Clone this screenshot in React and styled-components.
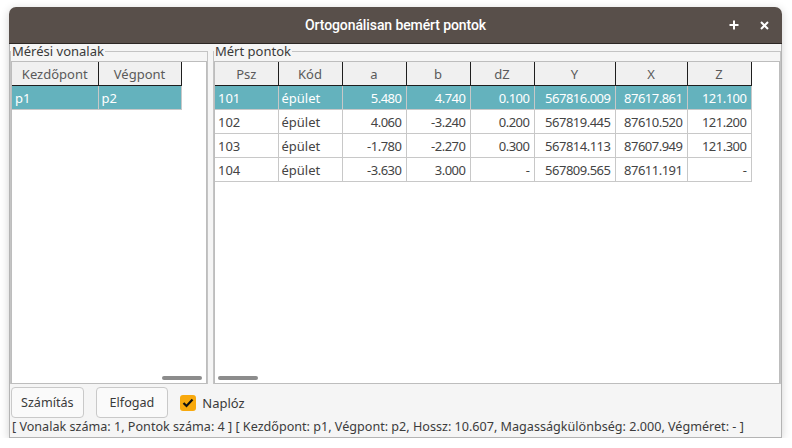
import styled, { createGlobalStyle } from "styled-components";

const GlobalStyle = createGlobalStyle`
  html, body {
    margin: 0;
    background: #ffffff;
  }
  body {
    font-family: "Noto Sans", "Open Sans", sans-serif;
    font-size: 13px;
    color: #3c3c3c;
  }
`;

const Window = styled.div`
  margin: 7px 0 0 9px;
  width: 773px;
  height: 431px;
  display: flex;
  flex-direction: column;
  border-radius: 7px 7px 0 0;
  box-shadow: 0 2px 10px rgba(0, 0, 0, 0.18);
  overflow: hidden;
`;

const TitleBar = styled.div`
  height: 36px;
  flex: none;
  background: #584f4a;
  border-bottom: 1px solid #2c2724;
  display: flex;
  align-items: center;
  justify-content: center;
  position: relative;
  color: #ffffff;
  font-family: "Roboto", sans-serif;
  font-weight: 500;
  font-size: 14px;
  letter-spacing: -0.1px;
`;

const TitleButtons = styled.div`
  position: absolute;
  right: 11px;
  top: 0;
  height: 100%;
  display: flex;
  align-items: center;
  gap: 16px;
`;

const TitleButton = styled.span`
  width: 14px;
  height: 14px;
  display: flex;
  align-items: center;
  justify-content: center;
`;

const Body = styled.div`
  flex: 1;
  min-height: 0;
  background: #f5f5f5;
  border: 1px solid #b4b4b4;
  border-top: none;
  display: flex;
  flex-direction: column;
`;

const Panels = styled.div`
  flex: 1;
  min-height: 0;
  display: grid;
  grid-template-columns: 198px 1fr;
  gap: 5px;
`;

const Group = styled.fieldset`
  margin: 0;
  padding: 0;
  border: 1px solid #c4c4c4;
  border-bottom: none;
  min-width: 0;
  display: flex;
  flex-direction: column;
`;

const Legend = styled.legend`
  padding: 0 1px;
  line-height: 14px;
  font-size: 13px;
  color: #3a3a3a;
`;

const ScrollArea = styled.div`
  flex: 1;
  margin-top: 3px;
  background: #ffffff;
  border: 1px solid #bdbdbd;
  position: relative;
  overflow: hidden;
`;

const Table = styled.table`
  border-collapse: collapse;
  table-layout: fixed;
  font-size: 13px;
`;

const Th = styled.th`
  height: 23px;
  padding: 0 4px;
  background: #f0f0f0;
  color: #5a5a5a;
  font-weight: 400;
  text-align: center;
  border-right: 1px solid #1e1e1e;
  border-bottom: 1px solid #1e1e1e;
`;

const Row = styled.tr`
  background: ${(p) => (p.$selected ? "#64b2bd" : "#ffffff")};
  color: ${(p) => (p.$selected ? "#ffffff" : "#444444")};
`;

const Td = styled.td`
  height: 23px;
  padding: 0 4px 0 3px;
  text-align: ${(p) => (p.$num ? "right" : "left")};
  letter-spacing: ${(p) => (p.$num ? "-0.5px" : "0")};
  border-right: 1px solid #c8c8c8;
  border-bottom: 1px solid #c8c8c8;
  white-space: nowrap;
`;

const ScrollThumb = styled.div`
  position: absolute;
  bottom: 3px;
  height: 4px;
  width: 40px;
  border-radius: 2px;
  background: #8c8c8c;
  left: ${(p) => p.$left}px;
`;

const ButtonRow = styled.div`
  flex: none;
  display: flex;
  align-items: center;
  gap: 12px;
  padding: 3px 0 0 1px;
`;

const Button = styled.button`
  height: 31px;
  padding: 0 ${(p) => p.$pad}px;
  background: #fafafa;
  border: 1px solid #c9c9c9;
  border-radius: 4px;
  font-family: inherit;
  font-size: 12.6px;
  color: #3a3a3a;
`;

const Check = styled.label`
  display: flex;
  align-items: center;
  gap: 6px;
  color: #3a3a3a;
  font-size: 13px;
`;

const CheckBox = styled.span`
  width: 16px;
  height: 16px;
  border-radius: 3px;
  background: #f8a90d;
  display: flex;
  align-items: center;
  justify-content: center;
`;

const Status = styled.div`
  flex: none;
  height: 19px;
  line-height: 17px;
  padding-left: 2px;
  font-size: 12.6px;
  color: #3c3c3c;
`;

const lines = [{ from: "p1", to: "p2" }];

const points = [
  ["101", "épület", "5.480", "4.740", "0.100", "567816.009", "87617.861", "121.100"],
  ["102", "épület", "4.060", "-3.240", "0.200", "567819.445", "87610.520", "121.200"],
  ["103", "épület", "-1.780", "-2.270", "0.300", "567814.113", "87607.949", "121.300"],
  ["104", "épület", "-3.630", "3.000", "-", "567809.565", "87611.191", "-"],
];

const pointCols = [
  { name: "Psz", w: 63 },
  { name: "Kód", w: 64 },
  { name: "a", w: 64, num: true },
  { name: "b", w: 64, num: true },
  { name: "dZ", w: 64, num: true },
  { name: "Y", w: 81, num: true },
  { name: "X", w: 72, num: true },
  { name: "Z", w: 64, num: true },
];

export default function App() {
  return (
    <>
      <GlobalStyle />
      <Window>
        <TitleBar>
          Ortogonálisan bemért pontok
          <TitleButtons>
            <TitleButton>
              <svg width="10" height="10" viewBox="0 0 10 10">
                <path d="M5 0.5v9M0.5 5h9" stroke="#fff" strokeWidth="2" />
              </svg>
            </TitleButton>
            <TitleButton>
              <svg width="9" height="9" viewBox="0 0 9 9">
                <path d="M1 1l7 7M8 1l-7 7" stroke="#fff" strokeWidth="2" />
              </svg>
            </TitleButton>
          </TitleButtons>
        </TitleBar>
        <Body>
          <Panels>
            <Group>
              <Legend>Mérési vonalak</Legend>
              <ScrollArea>
                <Table>
                  <colgroup>
                    <col style={{ width: 86 }} />
                    <col style={{ width: 83 }} />
                  </colgroup>
                  <thead>
                    <tr>
                      <Th>Kezdőpont</Th>
                      <Th>Végpont</Th>
                    </tr>
                  </thead>
                  <tbody>
                    {lines.map((l, i) => (
                      <Row key={i} $selected={i === 0}>
                        <Td>{l.from}</Td>
                        <Td>{l.to}</Td>
                      </Row>
                    ))}
                  </tbody>
                </Table>
                <ScrollThumb $left={150} />
              </ScrollArea>
            </Group>
            <Group>
              <Legend>Mért pontok</Legend>
              <ScrollArea>
                <Table>
                  <colgroup>
                    {pointCols.map((c) => (
                      <col key={c.name} style={{ width: c.w }} />
                    ))}
                  </colgroup>
                  <thead>
                    <tr>
                      {pointCols.map((c) => (
                        <Th key={c.name}>{c.name}</Th>
                      ))}
                    </tr>
                  </thead>
                  <tbody>
                    {points.map((p, i) => (
                      <Row key={p[0]} $selected={i === 0}>
                        {p.map((v, j) => (
                          <Td key={j} $num={pointCols[j].num}>
                            {v}
                          </Td>
                        ))}
                      </Row>
                    ))}
                  </tbody>
                </Table>
                <ScrollThumb $left={3} />
              </ScrollArea>
            </Group>
          </Panels>
          <ButtonRow>
            <Button $pad={9}>Számítás</Button>
            <Button $pad={13}>Elfogad</Button>
            <Check>
              <CheckBox>
                <svg width="12" height="10" viewBox="0 0 12 10">
                  <path d="M1.5 5l3 3 6-6.5" fill="none" stroke="#111" strokeWidth="2.2" />
                </svg>
              </CheckBox>
              Naplóz
            </Check>
          </ButtonRow>
          <Status>
            [ Vonalak száma: 1, Pontok száma: 4 ] [ Kezdőpont: p1, Végpont: p2, Hossz: 10.607,
            Magasságkülönbség: 2.000, Végméret: - ]
          </Status>
        </Body>
      </Window>
    </>
  );
}
